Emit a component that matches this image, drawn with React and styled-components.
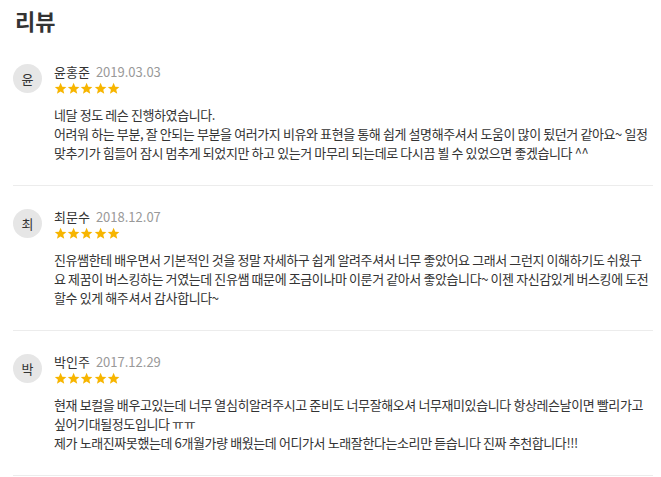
import React from "react";
import styled, { createGlobalStyle } from "styled-components";

const Global = createGlobalStyle`
  html, body { margin: 0; padding: 0; background: #fff; }
  body { font-family: "Noto Sans CJK KR", "Noto Sans", sans-serif; color: #333; }
`;

const Page = styled.div`
  padding: 5px 8px 0 13px;
  width: 640px;
`;

const Title = styled.h2`
  margin: 0 0 6px 2px;
  font-size: 22px;
  line-height: 30px;
  font-weight: 700;
  color: #333;
`;

const List = styled.ul`
  list-style: none;
  margin: 0;
  padding: 0;
`;

const Item = styled.li`
  display: flex;
  gap: 12px;
  padding: 22px 0 23px;
  border-bottom: 1px solid #ececec;
`;

const Avatar = styled.div`
  flex: none;
  width: 29px;
  height: 29px;
  margin-top: 1px;
  border-radius: 50%;
  background: #e6e6e6;
  display: flex;
  align-items: center;
  justify-content: center;
  font-size: 13px;
  color: #333;
`;

const Body = styled.div`
  flex: 1;
  min-width: 0;
`;

const Meta = styled.div`
  display: flex;
  align-items: baseline;
  gap: 6px;
  font-size: 13px;
  line-height: 18px;
`;

const Name = styled.span`
  color: #333;
`;

const Date = styled.span`
  color: #999;
  font-size: 13px;
`;

const Stars = styled.div`
  display: flex;
  height: 14px;
  align-items: center;
`;

const Text = styled.p`
  margin: 10px 0 0;
  font-size: 13px;
  line-height: 19px;
  letter-spacing: -0.4px;
  color: #333;
  white-space: nowrap;
`;

const Star = () => (
  <svg width="13.2" height="13" viewBox="0 0 24 24">
    <path
      fill="#f7b500"
      d="M12 1.5l3.1 7.1 7.6.6-5.8 5 1.8 7.5L12 17.7l-6.7 4 1.8-7.5-5.8-5 7.6-.6z"
    />
  </svg>
);

const reviews = [
  {
    initial: "윤",
    name: "윤홍준",
    date: "2019.03.03",
    lines: [
      "네달 정도 레슨 진행하였습니다.",
      "어려워 하는 부분, 잘 안되는 부분을 여러가지 비유와 표현을 통해 쉽게 설명해주셔서 도움이 많이 됬던거 같아요~ 일정",
      "맞추기가 힘들어 잠시 멈추게 되었지만 하고 있는거 마무리 되는데로 다시끔 뵐 수 있었으면 좋겠습니다 ^^",
    ],
  },
  {
    initial: "최",
    name: "최문수",
    date: "2018.12.07",
    lines: [
      "진유쌤한테 배우면서 기본적인 것을 정말 자세하구 쉽게 알려주셔서 너무 좋았어요 그래서 그런지 이해하기도 쉬웠구",
      "요 제꿈이 버스킹하는 거였는데 진유쌤 때문에 조금이나마 이룬거 같아서 좋았습니다~ 이젠 자신감있게 버스킹에 도전",
      "할수 있게 해주셔서 감사합니다~",
    ],
  },
  {
    initial: "박",
    name: "박인주",
    date: "2017.12.29",
    lines: [
      "현재 보컬을 배우고있는데 너무 열심히알려주시고 준비도 너무잘해오셔 너무재미있습니다 항상레슨날이면 빨리가고",
      "싶어기대될정도입니다 ㅠㅠ",
      "제가 노래진짜못했는데 6개월가량 배웠는데 어디가서 노래잘한다는소리만 듣습니다 진짜 추천합니다!!!",
    ],
  },
];

export default function App() {
  return (
    <>
      <Global />
      <Page>
        <Title>리뷰</Title>
        <List>
          {reviews.map((r) => (
            <Item key={r.name}>
              <Avatar>{r.initial}</Avatar>
              <Body>
                <Meta>
                  <Name>{r.name}</Name>
                  <Date>{r.date}</Date>
                </Meta>
                <Stars>
                  {[0, 1, 2, 3, 4].map((i) => (
                    <Star key={i} />
                  ))}
                </Stars>
                <Text>
                  {r.lines.map((l, i) => (
                    <React.Fragment key={i}>
                      {i > 0 && <br />}
                      {l}
                    </React.Fragment>
                  ))}
                </Text>
              </Body>
            </Item>
          ))}
        </List>
      </Page>
    </>
  );
}
